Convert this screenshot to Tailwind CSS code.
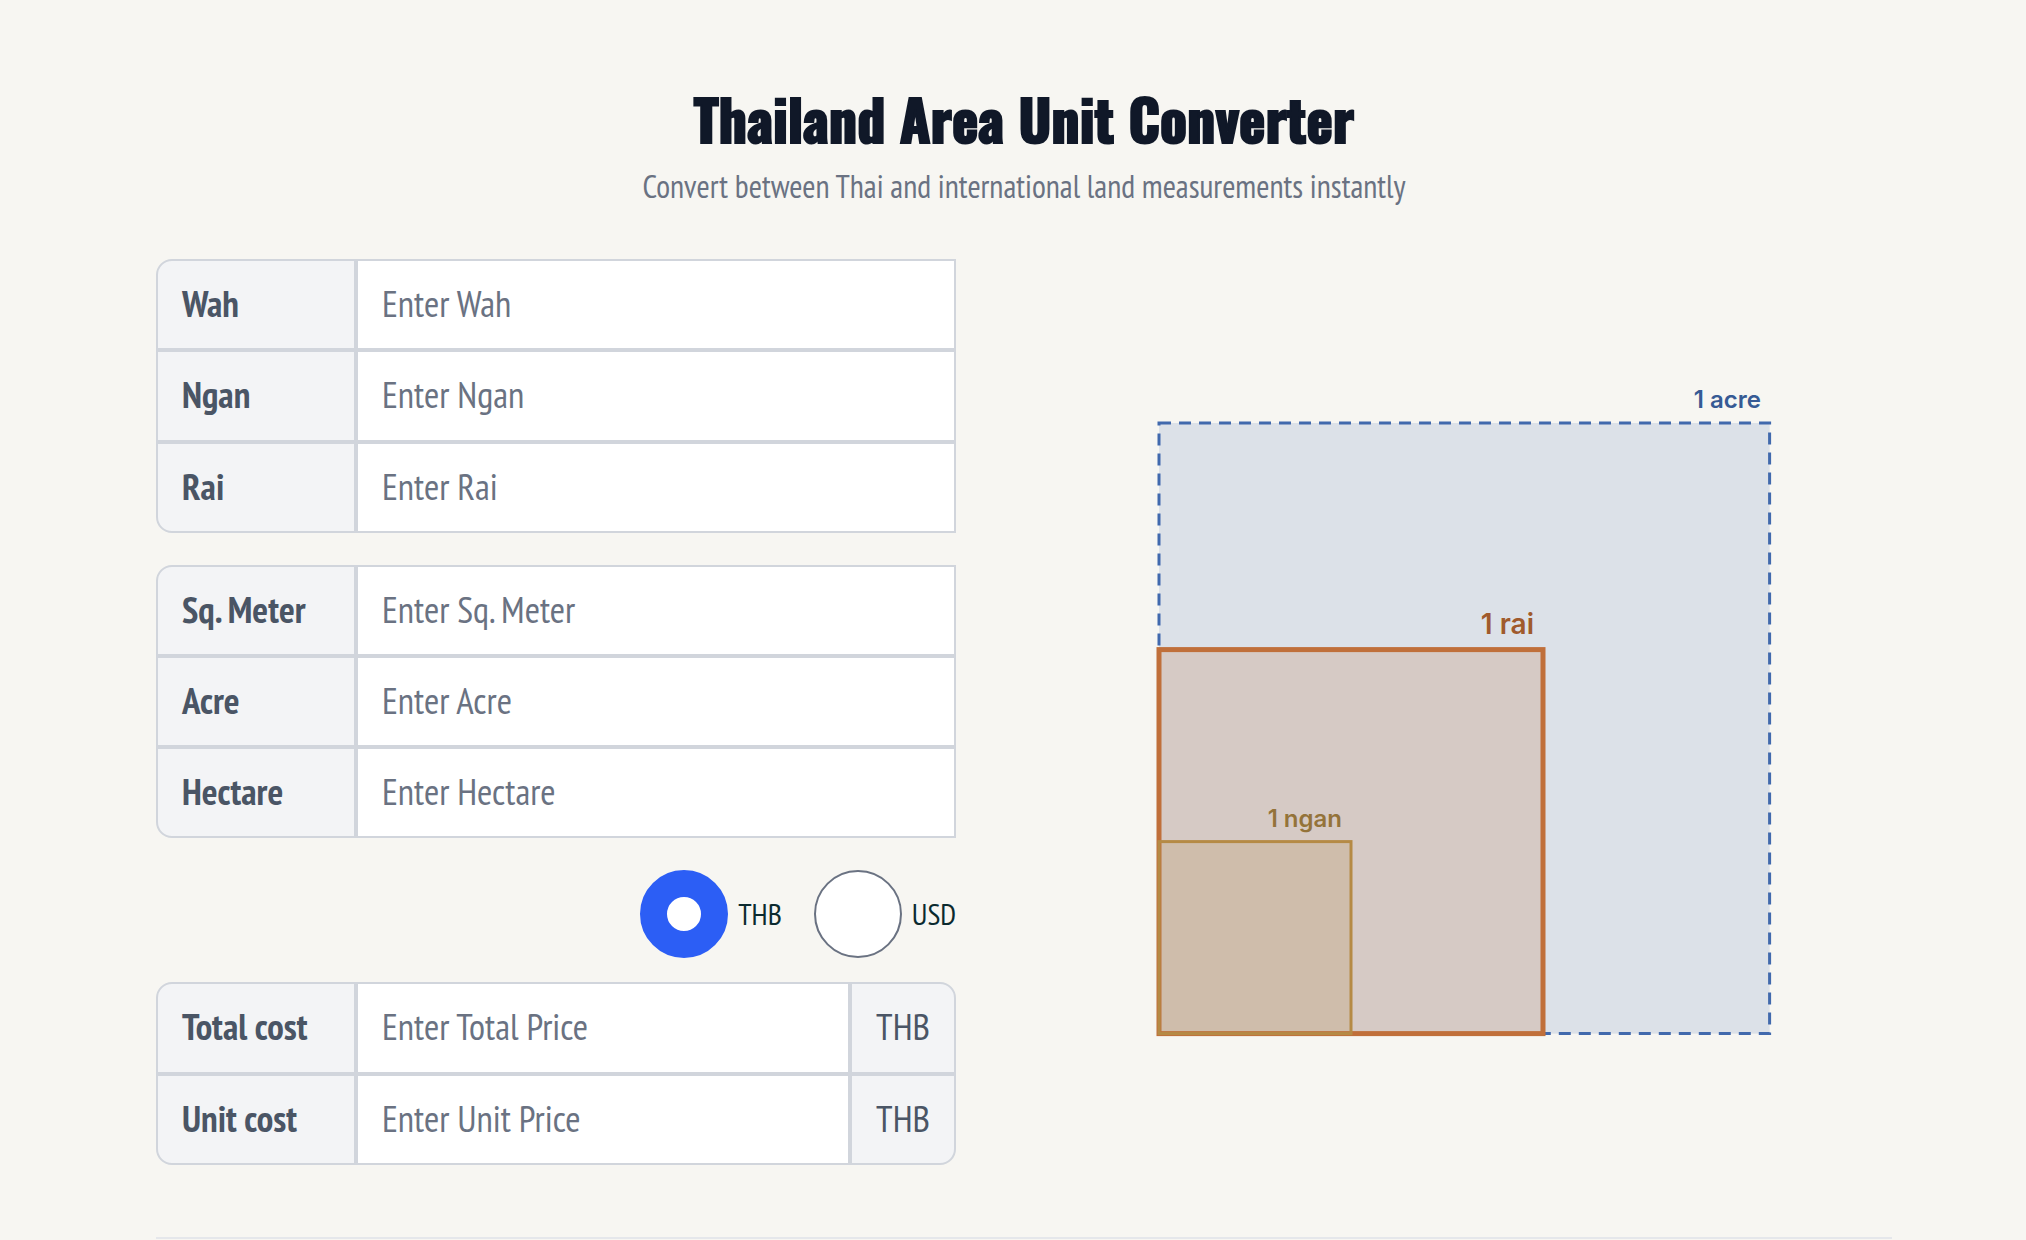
<!DOCTYPE html>
<html lang="en">
<head>
  <meta charset="UTF-8" />
  <meta name="viewport" content="width=device-width, initial-scale=1.0" />
  <title>Thailand Area Unit Converter</title>
  <script src="https://cdn.jsdelivr.net/npm/@tailwindcss/browser@4"></script>
</head>
<body class="min-h-screen overflow-x-hidden bg-[#f7f6f2] font-['PT_Sans_Narrow','Liberation_Sans',sans-serif] text-[#0b2a2f]">

  <main class="pl-[156px] pr-[134px] pt-20">
    <header class="text-center">
      <h1 class="font-['Impact','Oswald','Anton','Liberation_Sans',sans-serif] text-[56px] leading-[76px] font-bold text-gray-900 [-webkit-text-stroke:2px]">Thailand Area Unit Converter</h1>
      <p class="mt-2 text-[32px] leading-[44px] text-gray-500">Convert between Thai and international land measurements instantly</p>
    </header>

    <div class="mt-[51px] flex items-center gap-20">
      <form class="w-[800px] shrink-0 text-[37px] leading-[44px]">

        <!-- Thai units -->
        <div class="flex flex-col">
          <div class="flex h-[91px]">
            <label for="wah" class="flex w-[200px] items-center rounded-tl-2xl border-2 border-gray-300 bg-gray-100 px-6 pb-1 font-bold text-gray-600">Wah</label>
            <input id="wah" type="text" placeholder="Enter Wah" class="min-w-0 flex-1 border-2 border-gray-300 bg-white px-6 pb-1 placeholder:text-gray-500" />
          </div>
          <div class="flex h-[92px]">
            <label for="ngan" class="flex w-[200px] items-center border-2 border-gray-300 bg-gray-100 px-6 pb-1 font-bold text-gray-600">Ngan</label>
            <input id="ngan" type="text" placeholder="Enter Ngan" class="min-w-0 flex-1 border-2 border-gray-300 bg-white px-6 pb-1 placeholder:text-gray-500" />
          </div>
          <div class="flex h-[91px]">
            <label for="rai" class="flex w-[200px] items-center rounded-bl-2xl border-2 border-gray-300 bg-gray-100 px-6 pb-1 font-bold text-gray-600">Rai</label>
            <input id="rai" type="text" placeholder="Enter Rai" class="min-w-0 flex-1 border-2 border-gray-300 bg-white px-6 pb-1 placeholder:text-gray-500" />
          </div>
        </div>

        <!-- International units -->
        <div class="mt-8 flex flex-col">
          <div class="flex h-[91px]">
            <label for="sqm" class="flex w-[200px] items-center rounded-tl-2xl border-2 border-gray-300 bg-gray-100 px-6 pb-1 font-bold text-gray-600">Sq. Meter</label>
            <input id="sqm" type="text" placeholder="Enter Sq. Meter" class="min-w-0 flex-1 border-2 border-gray-300 bg-white px-6 pb-1 placeholder:text-gray-500" />
          </div>
          <div class="flex h-[91px]">
            <label for="acre" class="flex w-[200px] items-center border-2 border-gray-300 bg-gray-100 px-6 pb-1 font-bold text-gray-600">Acre</label>
            <input id="acre" type="text" placeholder="Enter Acre" class="min-w-0 flex-1 border-2 border-gray-300 bg-white px-6 pb-1 placeholder:text-gray-500" />
          </div>
          <div class="flex h-[91px]">
            <label for="hectare" class="flex w-[200px] items-center rounded-bl-2xl border-2 border-gray-300 bg-gray-100 px-6 pb-1 font-bold text-gray-600">Hectare</label>
            <input id="hectare" type="text" placeholder="Enter Hectare" class="min-w-0 flex-1 border-2 border-gray-300 bg-white px-6 pb-1 placeholder:text-gray-500" />
          </div>
        </div>

        <!-- Currency -->
        <div class="mt-8 flex justify-end gap-8 text-[30px]">
          <label class="flex items-center gap-[10px]">
            <input type="radio" name="currency" value="THB" checked class="size-[88px] appearance-none rounded-full border-2 border-gray-500 bg-white checked:border-[27px] checked:border-[#2c5ef5]" />
            THB
          </label>
          <label class="flex items-center gap-[10px]">
            <input type="radio" name="currency" value="USD" class="size-[88px] appearance-none rounded-full border-2 border-gray-500 bg-white checked:border-[27px] checked:border-[#2c5ef5]" />
            USD
          </label>
        </div>

        <!-- Price -->
        <div class="mt-6 flex flex-col">
          <div class="flex h-[92px]">
            <label for="total" class="flex w-[200px] items-center rounded-tl-2xl border-2 border-gray-300 bg-gray-100 px-6 pb-1 font-bold text-gray-600">Total cost</label>
            <input id="total" type="text" placeholder="Enter Total Price" class="min-w-0 flex-1 border-2 border-gray-300 bg-white px-6 pb-1 placeholder:text-gray-500" />
            <span class="flex w-[106px] items-center justify-center rounded-tr-2xl border-2 border-gray-300 bg-gray-100 pb-1 text-gray-600">THB</span>
          </div>
          <div class="flex h-[91px]">
            <label for="unit" class="flex w-[200px] items-center rounded-bl-2xl border-2 border-gray-300 bg-gray-100 px-6 pb-1 font-bold text-gray-600">Unit cost</label>
            <input id="unit" type="text" placeholder="Enter Unit Price" class="min-w-0 flex-1 border-2 border-gray-300 bg-white px-6 pb-1 placeholder:text-gray-500" />
            <span class="flex w-[106px] items-center justify-center rounded-br-2xl border-2 border-gray-300 bg-gray-100 pb-1 text-gray-600">THB</span>
          </div>
        </div>
      </form>

      <!-- Size comparison, 9.6 units to the metre -->
      <div class="flex min-w-0 flex-1 justify-center">
        <svg viewBox="0 -10 630 670" class="w-full max-w-[630px] font-['Inter','Liberation_Sans',sans-serif] font-semibold" role="img" aria-label="Relative size of an acre, a rai and a ngan">
          <rect x="10" y="36" width="610.6" height="610.6" fill="#4169ad" fill-opacity="0.15" stroke="#4169ad" stroke-width="3" stroke-dasharray="12 8" />
          <rect x="10" y="262.6" width="384" height="384" fill="#c06f3a" fill-opacity="0.2" stroke="#c06f3a" stroke-width="5" />
          <rect x="10" y="454.6" width="192" height="192" fill="#b58a45" fill-opacity="0.2" stroke="#b58a45" stroke-width="3" />
          <text x="612" y="21" text-anchor="end" font-size="24" fill="#365a94">1 acre</text>
          <text x="385" y="247" text-anchor="end" font-size="28" fill="#a05a2c">1 rai</text>
          <text x="193" y="440" text-anchor="end" font-size="24" fill="#94733a">1 ngan</text>
        </svg>
      </div>
    </div>

    <hr class="mt-[72px] border-t-2 border-gray-200" />
  </main>

</body>
</html>
